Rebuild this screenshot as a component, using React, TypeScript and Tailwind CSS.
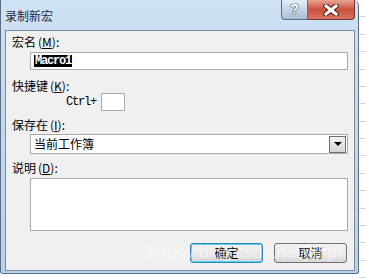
import React from "react"

const cjk = { fontFamily: '"Noto Sans CJK SC", "Liberation Sans", sans-serif' }
const mono = { fontFamily: '"Liberation Mono", monospace' }

const Label = ({ text, k }: { text: string; k: string }) => (
    <div className="h-[14px] pl-[6px] flex items-center text-[12px] leading-[14px] text-black" style={cjk}>
        <span>{text}</span>
        <span className="ml-[2px]">(<span className="underline">{k}</span>):</span>
    </div>
)

export default function App() {
    const ticks = Array.from({ length: 16 }, (_, i) => i)
    return (
        <div className="relative w-[366px] h-[278px] bg-white overflow-hidden flex">
            <div className="w-[359px] h-[274px] flex flex-col border-x border-b border-[#5b6e84] rounded-tr-[6px] rounded-b-[3px] bg-gradient-to-b from-[#cfe1f4] via-[#c2d8f0] to-[#b7d1ee]">
                <div className="h-[30px] flex items-start">
                    <div className="pl-[4px] pt-[8px] text-[12px] leading-[16px] text-[#1b2a3c]" style={cjk}>录制新宏</div>
                    <div className="ml-auto mr-[3px] flex h-[20px]">
                        <div className="w-[27px] h-full flex items-center justify-center rounded-bl-[4px] border border-t-0 border-[#5a6d83] bg-gradient-to-b from-[#e4edf7] via-[#c6d5e6] to-[#a9bdd3] text-white text-[15px] font-bold" style={{ fontFamily: '"Liberation Sans", sans-serif', textShadow: "0 0 1px #2b3d52, 0 0 1px #2b3d52, 0 0 1px #2b3d52" }}>?</div>
                        <div className="w-[47px] h-full flex items-center justify-center rounded-br-[4px] border border-l-0 border-t-0 border-[#6b3a34] bg-gradient-to-b from-[#e8a494] via-[#c9503b] to-[#d8735f]">
                            <svg width="16" height="12" viewBox="0 0 16 12">
                                <path d="M3 2 L13 10 M13 2 L3 10" stroke="#4a2018" strokeWidth="5" strokeLinecap="square" />
                                <path d="M3 2 L13 10 M13 2 L3 10" stroke="#ffffff" strokeWidth="3" strokeLinecap="square" />
                            </svg>
                        </div>
                    </div>
                </div>
                <div className="flex-1 ml-[4px] mr-[3px] mb-[2px] border border-[#7d8a98] bg-[#f0f0f0] flex flex-col">
                    <div className="mt-[4px]">
                        <Label text="宏名" k="M" />
                    </div>
                    <div className="mt-[3px] ml-[24px] w-[318px] h-[18px] border border-[#a9abaf] bg-white flex items-center pl-[3px]">
                        <span className="inline-block bg-black text-white text-[12px] leading-[12px] h-[12px] font-bold tracking-[-1.2px] px-[1px]" style={mono}>Macro1</span>
                    </div>
                    <div className="mt-[9px]">
                        <Label text="快捷键" k="K" />
                    </div>
                    <div className="h-[18px] flex items-center ml-[60px]">
                        <span className="text-[12px] tracking-[-1.2px] text-black" style={mono}>Ctrl+</span>
                        <div className="ml-[5px] w-[24px] h-[18px] border border-[#a9abaf] bg-white" />
                    </div>
                    <div className="mt-[7px]">
                        <Label text="保存在" k="I" />
                    </div>
                    <div className="mt-[2px] ml-[24px] w-[318px] h-[20px] border border-[#a9abaf] bg-white flex items-center">
                        <span className="pl-[3px] text-[12px] text-black" style={cjk}>当前工作簿</span>
                        <div className="ml-auto mr-[1px] w-[17px] h-[17px] border border-[#707070] bg-gradient-to-b from-[#f2f2f2] to-[#d6d6d6] flex items-center justify-center">
                            <div className="w-0 h-0 border-x-[4px] border-x-transparent border-t-[4px] border-t-black" />
                        </div>
                    </div>
                    <div className="mt-[7px]">
                        <Label text="说明" k="D" />
                    </div>
                    <div className="mt-[3px] ml-[24px] w-[318px] h-[53px] border border-[#a9abaf] bg-white" />
                    <div className="mt-[12px] flex gap-[11px] ml-[184px]">
                        <div className="w-[73px] h-[20px] rounded-[3px] border border-[#3c7fb1] shadow-[inset_0_0_0_1px_#48d4ff] bg-gradient-to-b from-[#f2f2f2] via-[#e8e8e8] to-[#d6d6d6] flex items-center justify-center text-[12px] text-black" style={cjk}>确定</div>
                        <div className="w-[73px] h-[20px] rounded-[3px] border border-[#707070] bg-gradient-to-b from-[#f2f2f2] via-[#ebebeb] to-[#d9d9d9] flex items-center justify-center text-[12px] text-black" style={cjk}>取消</div>
                    </div>
                </div>
            </div>
            <div className="flex-1 flex flex-col">
                {ticks.map((i) => (
                    <div key={i} className="h-[18px] border-b border-[#d4d9e1]" />
                ))}
            </div>
            <div className="absolute left-[148px] top-[243px] text-[17px] leading-[20px] text-white/50 pointer-events-none" style={{ fontFamily: '"Liberation Sans", sans-serif' }}>
                https://blog.csdn.net/janpf
            </div>
        </div>
    )
}
